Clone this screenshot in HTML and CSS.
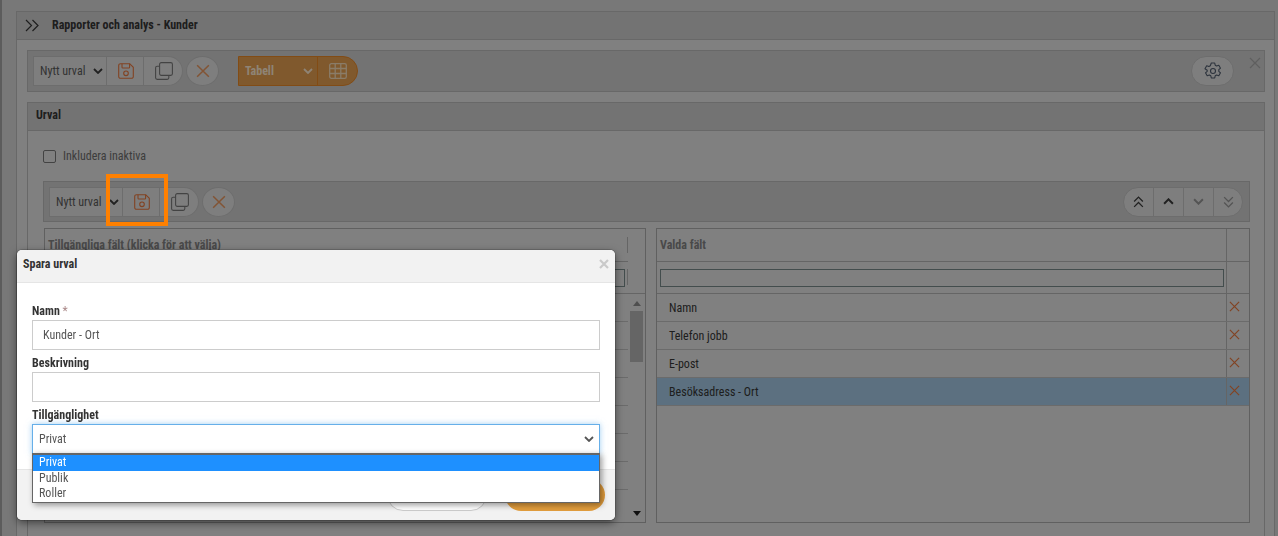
FILE: index.html
```html
<!DOCTYPE html>
<html lang="sv">
<head>
<meta charset="utf-8">
<title>Rapporter och analys - Kunder</title>
<link rel="stylesheet" href="styles.css">
</head>
<body>
<svg class="defs" width="0" height="0" aria-hidden="true">
  <defs>
    <symbol id="save" viewBox="0 0 16 16"><path d="M2.5 .7h9.2l3.6 3.6v9.2a1.8 1.8 0 0 1-1.8 1.8h-11a1.8 1.8 0 0 1-1.8-1.8v-11a1.8 1.8 0 0 1 1.8-1.8z" fill="none" stroke="currentColor" stroke-width="1.1"/><path d="M4 .8v3.4a.8.8 0 0 0 .8.8h6a.8.8 0 0 0 .8-.8v-3.4" fill="none" stroke="currentColor" stroke-width="1.1"/><circle cx="8" cy="10.300" r="2.300" fill="none" stroke="currentColor" stroke-width="1.1"/></symbol>
    <symbol id="copy" viewBox="0 0 18 18"><rect x="4.600" y=".6" width="12.800" height="12.800" rx="1.600" fill="none" stroke="currentColor" stroke-width="1.100"/><path d="M4.600 4.200h-2.400a1.600 1.600 0 0 0-1.600 1.600v10a1.600 1.600 0 0 0 1.600 1.600h10a1.600 1.600 0 0 0 1.600-1.600v-2.400" fill="none" stroke="currentColor" stroke-width="1.100"/></symbol>
    <symbol id="cross" viewBox="0 0 12 12"><path d="M1 1l10 10M11 1l-10 10" fill="none" stroke="currentColor" stroke-width="1.300"/></symbol>
    <symbol id="crossb" viewBox="0 0 10 10"><path d="M1 1l8 8M9 1l-8 8" fill="none" stroke="currentColor" stroke-width="2.200"/></symbol>
    <symbol id="chev" viewBox="0 0 10 6"><path d="M1 1l4 4 4-4" fill="none" stroke="currentColor" stroke-width="1.800"/></symbol>
    <symbol id="chevs" viewBox="0 0 10 11"><path d="M1 1l4 4 4-4M1 6l4 4 4-4" fill="none" stroke="currentColor" stroke-width="1.200"/></symbol>
    <symbol id="grid" viewBox="0 0 18 16"><rect x=".7" y=".7" width="16.600" height="14.600" rx="1.600" fill="none" stroke="currentColor" stroke-width="1.300"/><path d="M.7 5.500h16.600M.7 10.500h16.600M6.200 .7v14.600M11.800 .7v14.600" fill="none" stroke="currentColor" stroke-width="1.300"/></symbol>
    <symbol id="gear" viewBox="0 0 18 18"><path d="M7.300 1h3.400l.5 2.200 1.400.8 2.200-.7 1.700 2.900-1.700 1.500v1.600l1.700 1.500-1.700 2.900-2.200-.7-1.400.8-.5 2.200H7.300l-.5-2.200-1.400-.8-2.200.7-1.700-2.900 1.700-1.500V8.200L1 6.700l1.700-2.900 2.200.7 1.400-.8z" fill="none" stroke="currentColor" stroke-width="1.100" stroke-linejoin="round"/><circle cx="9" cy="9" r="2.500" fill="none" stroke="currentColor" stroke-width="1.100"/></symbol>
  </defs>
</svg>

<div class="page">
  <section class="outer">
    <header class="outer-head">
      <svg class="dbl" viewBox="0 0 14 13"><path d="M1 1l5.500 5.500-5.500 5.500M7.500 1l5.500 5.500-5.500 5.500" fill="none" stroke="currentColor" stroke-width="1.200"/></svg>
      <h1>Rapporter och analys - Kunder</h1>
    </header>
    <div class="outer-body">
      <div class="toolbar top">
        <div class="sel">Nytt urval<svg class="chev"><use href="#chev"/></svg></div>
        <button class="tb save"><svg><use href="#save"/></svg></button>
        <button class="tb copy"><svg><use href="#copy"/></svg></button>
        <button class="tb round"><svg><use href="#cross"/></svg></button>
        <div class="view">
          <span class="view-name">Tabell<svg class="chev"><use href="#chev"/></svg></span>
          <span class="view-ico"><svg><use href="#grid"/></svg></span>
        </div>
        <button class="tb gear"><svg><use href="#gear"/></svg></button>
        <svg class="close-top"><use href="#cross"/></svg>
      </div>

      <section class="urval">
        <header class="urval-head">Urval</header>
        <div class="urval-body">
          <label class="check"><span class="box"></span>Inkludera inaktiva</label>
          <div class="toolbar inner">
            <div class="sel">Nytt urval<svg class="chev"><use href="#chev"/></svg></div>
            <button class="tb save"><svg><use href="#save"/></svg></button>
            <button class="tb copy"><svg><use href="#copy"/></svg></button>
            <button class="tb round"><svg><use href="#cross"/></svg></button>
            <div class="arrows">
              <span><svg class="chevs up"><use href="#chevs"/></svg></span>
              <span><svg class="one up"><use href="#chev"/></svg></span>
              <span class="dim"><svg class="one"><use href="#chev"/></svg></span>
              <span class="dim"><svg class="chevs"><use href="#chevs"/></svg></span>
            </div>
          </div>
          <div class="lists">
            <div class="list left">
              <div class="l-head"><span>Tillgängliga fält (klicka för att välja)</span></div>
              <div class="l-filter"><span class="finput"></span></div>
              <div class="l-rows">
                <div class="l-lines">
                  <i></i><i></i><i></i><i></i><i></i><i></i><i></i>
                </div>
                <div class="sbar"><b class="arr-up"></b><b class="thumb"></b><b class="arr-down"></b></div>
              </div>
            </div>
            <div class="list right">
              <div class="r-head"><span>Valda fält</span><em></em></div>
              <div class="r-filter"><span class="finput"></span><em></em></div>
              <div class="r-row"><span>Namn</span><em><svg><use href="#cross"/></svg></em></div>
              <div class="r-row"><span>Telefon jobb</span><em><svg><use href="#cross"/></svg></em></div>
              <div class="r-row"><span>E-post</span><em><svg><use href="#cross"/></svg></em></div>
              <div class="r-row sel-row"><span>Besöksadress - Ort</span><em><svg><use href="#cross"/></svg></em></div>
            </div>
          </div>
        </div>
      </section>
    </div>
  </section>
</div>

<div class="backdrop"></div>
<div class="hilite"></div>

<div class="modal">
  <header class="m-head"><span>Spara urval</span><svg class="m-x"><use href="#crossb"/></svg></header>
  <div class="m-body">
    <label class="f-label">Namn <span class="req">*</span></label>
    <div class="f-input">Kunder - Ort</div>
    <label class="f-label">Beskrivning</label>
    <div class="f-input"></div>
    <label class="f-label">Tillgänglighet</label>
    <div class="f-input focus"><span>Privat</span><svg class="chev"><use href="#chev"/></svg></div>
  </div>
  <footer class="m-foot">
    <span class="btn ghost"></span>
    <span class="btn solid"></span>
  </footer>
  <ul class="drop">
    <li class="on">Privat</li>
    <li>Publik</li>
    <li>Roller</li>
  </ul>
</div>
</body>
</html>
```

FILE: styles.css
```css
* { box-sizing: border-box; }
html, body { margin: 0; height: 100%; overflow: hidden; }
body {
  background: #c8c8c8;
  font-family: "Roboto Condensed", "Liberation Sans Narrow", Roboto, sans-serif;
  font-size: 12px;
  color: #333;
}
.defs { position: absolute; }
button { padding: 0; font: inherit; }

.page { height: 536px; padding: 11px 3px 0 14px; border-left: 2px solid #999; }
.outer { height: 525px; border: 1px solid #aeaeae; border-bottom: 0; background: #d5d5d5; }
.outer-head {
  height: 28px; display: flex; align-items: center; gap: 13px; padding-left: 8px;
  background: #c0c0c0; border-bottom: 1px solid #aeaeae;
}
.outer-head h1 { margin: 0 0 2px; font-size: 12px; font-weight: 700; color: #333; }
.dbl { width: 14px; height: 13px; color: #333; }
.outer-body { padding: 10px 9px 0 10px; }

.toolbar {
  display: flex; align-items: center; background: #c0c0c0; border: 1px solid #aeaeae;
}
.toolbar.top { height: 42px; padding-left: 5px; position: relative; }
.toolbar.inner { height: 41px; padding-left: 5px; }

.sel {
  width: 74px; height: 30px; display: flex; align-items: center; justify-content: space-between;
  background: #d2d2d2; border: 1px solid #b6b6b6; padding: 0 3px 0 6px; color: #555;
}
.sel .chev { width: 10px; height: 6px; color: #383838; }
.tb { border: 1px solid #b6b6b6; background: #d2d2d2; display: flex; align-items: center; justify-content: center; height: 30px; }
.tb svg { width: 16px; height: 16px; }
.save { width: 38px; margin-left: -1px; padding-left: 1px; color: #d9703a; }
.copy { width: 39px; margin-left: 0; padding-left: 1px; border-left: 0; border-radius: 0 15px 15px 0; color: #717171; }
.copy svg { width: 18px; height: 18px; }
.round { width: 33px; height: 30px; border-radius: 50%; margin-left: 3px; color: #d98c58; }
.round svg { width: 14px; height: 14px; }

.view { margin-left: 19px; height: 30px; display: flex; border: 1px solid #d97f24; border-radius: 0 15px 15px 0; background: #d5944c; }
.view-name { width: 79px; display: flex; align-items: center; justify-content: space-between; padding: 0 4px 0 6px; font-weight: 700; color: #eedcc4; border-right: 1px solid #d97f24; }
.view-name .chev { width: 10px; height: 6px; color: #eedcc4; }
.view-ico { width: 39px; display: flex; align-items: center; justify-content: center; color: #e6cfae; }
.view-ico svg { width: 18px; height: 16px; }

.tb.gear { margin-left: auto; margin-right: 30px; width: 43px; border-radius: 15px; color: #4a5565; }
.tb.gear svg { width: 18px; height: 18px; }
.close-top { position: absolute; right: 3px; top: 6px; width: 12px; height: 12px; color: #9e9e9e; }

.urval { margin-top: 10px; border: 1px solid #aeaeae; border-bottom: 0; height: 434px; }
.urval-head { height: 28px; display: flex; align-items: center; padding: 0 0 4px 8px; font-weight: 700; color: #333; background: #c0c0c0; border-bottom: 1px solid #aeaeae; }
.urval-body { padding: 0 14px 0 15px; }
.check { height: 50px; display: flex; align-items: center; gap: 7px; color: #666; font-size: 12px; }
.box { width: 13px; height: 13px; border: 1px solid #707070; border-radius: 2px; }
.arrows { margin-left: auto; margin-right: 6px; display: flex; height: 30px; border: 1px solid #b6b6b6; border-radius: 15px; background: #d2d2d2; overflow: hidden; }
.arrows span { width: 30px; display: flex; align-items: center; justify-content: center; color: #383838; border-left: 1px solid #b6b6b6; }
.arrows span:first-child { width: 29px; border-left: 0; }
.arrows span:last-child { width: 29px; }
.arrows .dim { color: #8c8c8c; }
.arrows .chevs { width: 11px; height: 12px; }
.arrows .one { width: 11px; height: 7px; }
.arrows .up { transform: scaleY(-1); }

.lists { display: flex; gap: 10px; margin-top: 6px; padding-left: 1px; }
.list { height: 295px; border: 1px solid #a0a0a0; flex: none; }
.left { width: 602px; }
.right { width: 594px; }
.l-head { height: 33px; margin-right: 17px; border-bottom: 1px solid #a8a8a8; display: flex; align-items: center; justify-content: space-between; padding-left: 3px; font-weight: 700; color: #7a7a7a; }
.l-head::after { content: ""; width: 1px; height: 16px; background: #a8a8a8; }
.l-filter { height: 32px; border-bottom: 1px solid #a8a8a8; padding: 7px 17px 6px 4px; display: flex; }
.l-filter::after { content: ""; width: 1px; height: 16px; margin-left: 2px; background: #a8a8a8; }
.l-filter .finput { flex: 1; border: 1px solid #708080; }
.l-rows { display: flex; height: 228px; }
.l-lines { flex: 1; display: flex; flex-direction: column; }
.l-lines i { height: 28px; flex: none; border-bottom: 1px solid #b2b2b2; }
.sbar { width: 17px; position: relative; display: flex; flex-direction: column; align-items: center; }
.thumb { width: 13px; height: 51px; margin-top: 17px; background: #a9a9a9; }
.arr-up, .arr-down { position: absolute; width: 0; height: 0; border-left: 4px solid transparent; border-right: 4px solid transparent; }
.arr-up { top: 7px; border-bottom: 5px solid #838383; }
.arr-down { bottom: 6px; border-top: 5px solid #1c1c1c; }

.r-head, .r-filter, .r-row { display: flex; border-bottom: 1px solid #b2b2b2; }
.r-head span, .r-filter .finput, .r-row span { flex: 1; }
.r-head { height: 33px; border-bottom-color: #a8a8a8; font-weight: 700; color: #7a7a7a; }
.r-filter { height: 32px; border-bottom-color: #a8a8a8; padding-left: 3px; }
.r-head span { display: flex; align-items: center; padding-left: 3px; }
.r-filter .finput { margin: 7px 2px 6px 0; border: 1px solid #708080; }
em { width: 23px; flex: none; border-left: 1px solid #a8a8a8; display: flex; align-items: center; justify-content: center; color: #d9703a; }
.r-row { height: 28px; }
.r-row span { display: flex; align-items: center; padding-left: 12px; color: #333; }
.r-row em { padding-right: 7px; padding-bottom: 2px; }
.r-row em svg { width: 11px; height: 11px; }
.sel-row { background: #99bbd5; }

.backdrop { position: fixed; inset: 0; background: rgba(0, 0, 0, .4); }
.hilite { position: absolute; left: 106px; top: 174px; width: 62px; height: 52px; border: 4px solid #ff8000; }

.modal { position: absolute; left: 17px; top: 250px; width: 598px; height: 270px; background: #fff; border-radius: 5px; box-shadow: 0 0 0 1px rgba(0, 0, 0, .15), 0 3px 9px rgba(0, 0, 0, .5); }
.m-head { height: 33px; display: flex; align-items: center; justify-content: space-between; padding: 0 6px 4px 6px; background: #f2f2f2; border-bottom: 1px solid #e5e5e5; border-radius: 5px 5px 0 0; font-weight: 700; color: #333; }
.m-x { width: 10px; height: 10px; color: #c9c9c9; margin-bottom: 1px; }
.m-body { padding: 20px 15px 0; }
.f-label { display: block; height: 17px; line-height: 16px; font-weight: 700; color: #333; margin-top: 5px; }
.f-label:first-child { margin-top: 0; }
.req { color: #a88; font-weight: 400; }
.f-input { height: 30px; border: 1px solid #ccc; padding-left: 10px; display: flex; align-items: center; justify-content: space-between; color: #555; background: #fff; }
.f-input.focus { padding: 0 5px 0 6px; border-color: #66afe9; box-shadow: 0 0 6px rgba(102, 175, 233, .6); }
.f-input.focus span { margin-bottom: 1px; }
.f-input .chev { width: 10px; height: 6px; color: #555; }
.m-foot { position: absolute; left: 0; right: 0; bottom: 0; height: 51px; display: flex; justify-content: flex-end; gap: 18px; padding: 9px 10px 0 0; background: #f2f2f2; border-top: 1px solid #e5e5e5; border-radius: 0 0 5px 5px; }
.btn { width: 100px; height: 32px; border-radius: 16px; }
.ghost { border: 1px solid #ccc; background: #fff; }
.solid { background: #e29d3d; }
.drop { position: absolute; left: 15px; top: 203px; width: 568px; margin: 0; padding: 0; list-style: none; background: #fff; border: 1px solid #666; border-top-width: 2px; box-shadow: 2px 2px 6px rgba(0, 0, 0, .4); color: #555; }
.drop li { height: 15.67px; line-height: 15px; padding-left: 6px; }
.drop .on { background: #1e90ff; color: #fff; }
```
